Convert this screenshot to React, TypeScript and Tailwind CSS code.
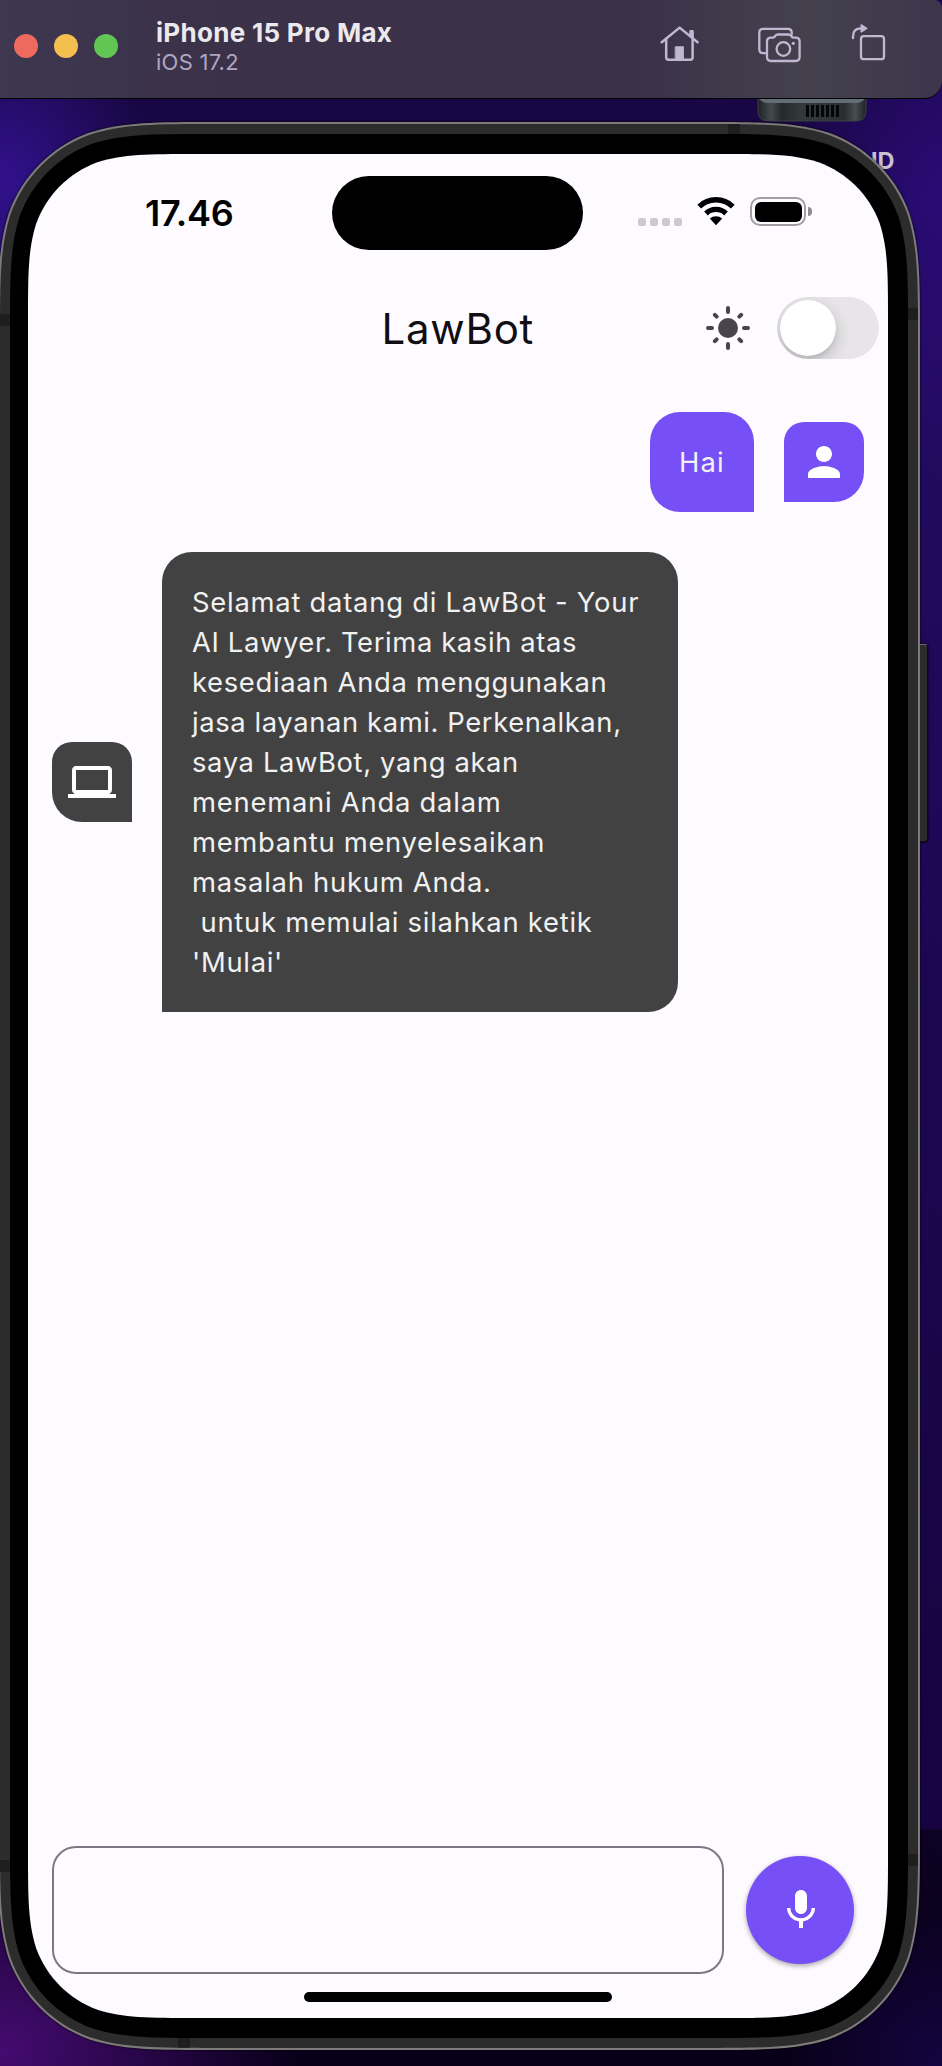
import type { ReactNode } from "react";

/** Rounded rectangle with continuous (squircle-like) corners, as a CSS path. */
function continuousRect(w: number, h: number, r: number): string {
  const corner = (px: (a: number, b: number) => string) =>
    `L${px(1.528665, 0)}` +
    `C${px(1.088493, 0)} ${px(0.868407, 0)} ${px(0.631494, 0.074911)}` +
    `C${px(0.372824, 0.169059)} ${px(0.16906, 0.372824)} ${px(0.074911, 0.631494)}` +
    `C${px(0, 0.868407)} ${px(0, 1.088493)} ${px(0, 1.528665)}`;
  const reversed = (px: (a: number, b: number) => string) => corner((a, b) => px(b, a));
  const f = (x: number, y: number) => `${x.toFixed(2)},${y.toFixed(2)} `;
  const tr = corner((a, b) => f(w - a * r, b * r));
  const br = reversed((a, b) => f(w - a * r, h - b * r));
  const bl = corner((a, b) => f(a * r, h - b * r));
  const tl = reversed((a, b) => f(a * r, b * r));
  return `path("M${f(1.528665 * r, 0)}${tr}${br}${bl}${tl}Z")`;
}

function Layer(props: { w: number; h: number; r: number; className: string; children?: ReactNode }) {
  return (
    <div className={props.className} style={{ width: props.w, height: props.h, clipPath: continuousRect(props.w, props.h, props.r) }}>
      {props.children}
    </div>
  );
}

function HomeIcon() {
  return (
    <svg width="40" height="44" viewBox="0 0 40 44" fill="none" stroke="#c0b8d0" strokeWidth="2.5" strokeLinecap="round" strokeLinejoin="round">
      <path d="M1.7 22.3 19.6 7.6 37.6 22.3" />
      <path d="M6.2 19.5V37.3q0 2.5 2.5 2.5H30.1q2.5 0 2.5-2.5V19.5" />
      <path d="M30.6 11.2h2v6.3l-2-1.6z" fill="#c0b8d0" />
      <path d="M15.6 26.8h7.8v13h-7.8z" fill="#c0b8d0" strokeWidth="1" />
    </svg>
  );
}

function CameraIcon() {
  return (
    <svg width="48" height="44" viewBox="0 0 48 44" fill="none" stroke="#c0b8d0" strokeWidth="2.3" strokeLinecap="round" strokeLinejoin="round">
      <path d="M35.7 14.6V12.6q0-3.8-3.8-3.8H7.1Q3.3 8.8 3.3 12.6V29.3Q3.3 33.1 7.1 33.1H9.8" />
      <path d="M11 21.6q0-3.9 3.9-3.9h1.9q1.1 0 1.8-.9l1-1.2q.9-1.1 2.2-1.1h10.8q1.3 0 2.2 1.1l1 1.2q.7.9 1.8.9h2.1q3.9 0 3.9 3.9V37.1q0 3.9-3.9 3.9H14.9q-3.9 0-3.9-3.9z" />
      <circle cx="27.4" cy="29" r="6.8" />
      <circle cx="37.3" cy="23.3" r="1.6" fill="#c0b8d0" stroke="none" />
    </svg>
  );
}

function RotateIcon() {
  return (
    <svg width="40" height="44" viewBox="0 0 40 44" fill="none" stroke="#c0b8d0" strokeWidth="2.3" strokeLinecap="round" strokeLinejoin="round">
      <rect x="13" y="16.2" width="23" height="23" rx="2.8" />
      <path d="M5 18.2V16.4Q5 8.4 13 8.4" />
      <path d="M13.2 4.9V11.9L18.8 8.4z" fill="#c0b8d0" strokeWidth="1.4" />
    </svg>
  );
}

function TitleBar() {
  return (
    <header className="relative flex h-[99px] w-[942px] shrink-0 items-start rounded-br-[18px] rounded-tr-[8px] border-b border-black bg-[linear-gradient(90deg,#3d374f_0%,#3b3149_25%,#3b3149_68%,#403b4b_78%,#44414d_86%,#3c364c_100%)]">
      <div className="ml-[14px] mt-[34px] flex gap-4">
        <span className="size-6 rounded-full bg-[#ee6a5f]" />
        <span className="size-6 rounded-full bg-[#f5bf4f]" />
        <span className="size-6 rounded-full bg-[#62c655]" />
      </div>
      <div className="ml-[38px] mt-[17px] w-[300px]">
        <h1 className="text-[26px] leading-[32px] font-bold tracking-[0.3px] text-[#ebe9ee]">iPhone 15 Pro Max</h1>
        <p className="text-[22px] leading-[26px] tracking-[0.25px] text-[#afa6c2]">iOS 17.2</p>
      </div>
      <div className="mt-5 ml-auto mr-[54px] flex">
        <HomeIcon />
        <span className="w-14" />
        <CameraIcon />
        <span className="w-11" />
        <RotateIcon />
      </div>
    </header>
  );
}

function DriveIcon() {
  return (
    <svg className="absolute left-[756px] top-[88px]" width="112" height="36" viewBox="0 0 112 36">
      <defs>
        <linearGradient id="drive" x1="0" x2="1" y1="0" y2="0">
          <stop offset="0" stopColor="#1d2224" />
          <stop offset="0.12" stopColor="#454a4c" />
          <stop offset="0.22" stopColor="#25292b" />
          <stop offset="0.4" stopColor="#34393b" />
          <stop offset="0.8" stopColor="#2a2e30" />
          <stop offset="0.9" stopColor="#484d4f" />
          <stop offset="1" stopColor="#1d2224" />
        </linearGradient>
      </defs>
      <path d="M2 8H110V22Q110 33 100 33H12Q2 33 2 22Z" fill="url(#drive)" stroke="#3d4244" strokeWidth="1" />
      <path d="M1 4H111Q110 14 101 15H11Q2 14 1 4Z" fill="#646d74" />
      {[50, 55, 60, 65, 70, 75, 80].map((x) => (
        <rect key={x} x={x} y="17" width="3" height="12" fill="#050607" />
      ))}
    </svg>
  );
}

function StatusBar() {
  return (
    <div className="flex h-[120px] items-start">
      <div className="ml-[117px] mt-[37px] w-[110px] text-[36px] leading-[44px] font-semibold tracking-[-0.3px] text-black">17.46</div>
      <div className="ml-[77px] mt-[22px] h-[74px] w-[251px] rounded-[37px] bg-black" />
      <div className="ml-[55px] mt-[64px] flex gap-1">
        {[0, 1, 2, 3].map((n) => (
          <span key={n} className="size-2 rounded-[2.5px] bg-[#cbc9cd]" />
        ))}
      </div>
      <svg className="ml-[14.5px] mt-[43px]" width="38" height="29" viewBox="0 0 38 29" fill="none" stroke="#000" strokeWidth="5.3">
        <path d="M2.2 9.6A24 24 0 0 1 35.8 9.6" />
        <path d="M9 16.5A14.3 14.3 0 0 1 29 16.5" />
        <path d="M19 28.2 12.8 21.6A9.2 9.2 0 0 1 25.2 21.6Z" fill="#000" stroke="none" />
      </svg>
      <div className="ml-[15.5px] mt-[43px] h-[29px] w-14 rounded-[10px] border-2 border-[#a09ea1] p-[2.5px]">
        <div className="h-full rounded-[6px] bg-black" />
      </div>
      <div className="ml-[2px] mt-[53px] h-[9px] w-1 rounded-r-full bg-[#8d8b8e]" />
    </div>
  );
}

function SunIcon() {
  return (
    <svg width="48" height="48" viewBox="-24 -24 48 48" stroke="#49454f" strokeWidth="4" strokeLinecap="round">
      <circle r="10" fill="#49454f" stroke="none" />
      <path d="M0-20v4M0 20v-4M-20 0h4M20 0h-4M-13.2-13.2l1.9 1.9M13.2-13.2l-1.9 1.9M-13.2 13.2l1.9-1.9M13.2 13.2l-1.9-1.9" />
    </svg>
  );
}

function AppBar() {
  return (
    <div className="flex h-[108px] items-center">
      <h2 className="ml-[353.5px] w-[322.5px] pt-px text-[42px] leading-[52px] tracking-[0.75px] text-[#100e12]">LawBot</h2>
      <SunIcon />
      <div className="ml-[25px] flex h-[62px] w-[102px] items-center overflow-hidden rounded-full bg-[#e7e5e8] pl-[3px]">
        <div className="size-14 rounded-full bg-white shadow-[0_6px_16px_rgba(0,0,0,0.2),0_3px_3px_rgba(0,0,0,0.06)]" />
      </div>
    </div>
  );
}

const lines: { text: string; className: string }[] = [
  { text: "Selamat datang di LawBot - Your", className: "tracking-[0.75px]" },
  { text: "AI Lawyer. Terima kasih atas", className: "tracking-[0.61px]" },
  { text: "kesediaan Anda menggunakan", className: "tracking-[0.67px]" },
  { text: "jasa layanan kami. Perkenalkan,", className: "tracking-[0.6px]" },
  { text: "saya LawBot, yang akan", className: "tracking-[0.62px]" },
  { text: "menemani Anda dalam", className: "tracking-[0.76px]" },
  { text: "membantu menyelesaikan", className: "tracking-[0.7px]" },
  { text: "masalah hukum Anda.", className: "tracking-[0.74px]" },
  { text: " untuk memulai silahkan ketik", className: "tracking-[0.74px]" },
  { text: "'Mulai'", className: "tracking-[0.72px]" },
];

function Chat() {
  return (
    <main className="flex-1 text-[27.4px] leading-[40px] text-[#f1f1f1]">
      <div className="flex items-center justify-end pr-[24px] pt-[30px]">
        <div className="flex h-[100px] w-[104.5px] items-center rounded-[30px] rounded-br-none bg-[#7650f6] pl-[29.5px] tracking-[1.1px]">Hai</div>
        <div className="ml-[30px] flex size-20 items-center justify-center rounded-[20px] rounded-br-[30px] rounded-bl-none bg-[#7650f6]">
          <svg width="48" height="48" viewBox="0 0 24 24" fill="#fff">
            <path d="M12 12c2.21 0 4-1.79 4-4s-1.79-4-4-4-4 1.79-4 4 1.79 4 4 4zm0 2c-2.67 0-8 1.34-8 4v2h16v-2c0-2.66-5.33-4-8-4z" />
          </svg>
        </div>
      </div>
      <div className="mt-10 flex items-center pl-6">
        <div className="flex size-20 items-center justify-center rounded-[20px] rounded-br-none rounded-bl-[30px] bg-[#424242]">
          <svg width="48" height="48" viewBox="0 0 24 24" fill="#fff">
            <path d="M20 18c1.1 0 1.99-.9 1.99-2L22 6c0-1.1-.9-2-2-2H4c-1.1 0-2 .9-2 2v10c0 1.1.9 2 2 2H0v2h24v-2h-4zM4 6h16v10H4V6z" />
          </svg>
        </div>
        <div className="ml-[30px] w-[516px] rounded-[30px] rounded-bl-none bg-[#424242] p-[30px]">
          {lines.map((line) => (
            <p key={line.text} className={`whitespace-pre ${line.className}`}>
              {line.text}
            </p>
          ))}
        </div>
      </div>
    </main>
  );
}

function Composer() {
  return (
    <footer className="flex h-[172px] flex-col">
      <div className="flex items-center pl-6">
        <input aria-label="Pesan" className="h-32 w-[672px] rounded-[24px] border-2 border-[#7d7785] bg-transparent px-6 text-[28px] outline-none" />
        <button type="button" aria-label="Rekam suara" className="ml-[22px] flex size-[108px] items-center justify-center rounded-full bg-[#7650f6] pl-[1px] shadow-[0_2px_5px_rgba(0,0,0,0.35)]">
          <svg width="48" height="48" viewBox="0 0 24 24" fill="#fff">
            <path d="M12 14c1.66 0 2.99-1.34 2.99-3L15 5c0-1.66-1.34-3-3-3S9 3.34 9 5v6c0 1.66 1.34 3 3 3zm5.3-3c0 3-2.54 5.1-5.3 5.1S6.7 14 6.7 11H5c0 3.41 2.72 6.23 6 6.72V21h2v-3.28c3.28-.48 6-3.3 6-6.72h-1.7z" />
          </svg>
        </button>
      </div>
      <div className="mt-[18px] ml-[276px] h-[10px] w-[308px] rounded-full bg-black" />
    </footer>
  );
}

function Phone() {
  return (
    <div className="relative mt-[23px] -ml-[2px] w-[922px] shrink-0 drop-shadow-[0_0_1px_#000]">
      <div className="absolute top-[522px] left-[921px] h-[198px] w-[9px] rounded-r-[3px] border border-l-0 border-[#0d0d0f] border-t-[#6a6a6c] bg-[#2c2c2c]" />
      <Layer w={922} h={1928} r={144} className="bg-[#7d7c7b] p-[2px]">
        <Layer w={918} h={1924} r={142} className="relative bg-[#2c2c2c] p-[10px]">
          <span className="absolute top-0 left-[728px] h-[10px] w-3 bg-[#1e1e1e]" />
          <span className="absolute bottom-0 left-[178px] h-[10px] w-3 bg-[#1e1e1e]" />
          <span className="absolute top-[190px] left-0 h-3 w-[10px] bg-[#1e1e1e]" />
          <span className="absolute top-[184px] right-0 h-3 w-[10px] bg-[#1e1e1e]" />
          <span className="absolute top-[1736px] left-0 h-3 w-[10px] bg-[#1e1e1e]" />
          <span className="absolute top-[1730px] right-0 h-3 w-[10px] bg-[#1e1e1e]" />
          <Layer w={898} h={1904} r={130} className="relative bg-black pt-[20px] pl-[18px]">
            <Layer w={860} h={1864} r={110} className="flex flex-col bg-[#fdfbff]">
              <StatusBar />
              <AppBar />
              <Chat />
              <Composer />
            </Layer>
          </Layer>
        </Layer>
      </Layer>
    </div>
  );
}

export default function App() {
  return (
    <div className="relative flex h-[2066px] w-[942px] flex-col overflow-hidden bg-[radial-gradient(ellipse_150px_170px_at_0px_180px,#31118c_0%,transparent_100%),radial-gradient(ellipse_150px_260px_at_942px_200px,#2a0b75_0%,transparent_100%),radial-gradient(ellipse_300px_240px_at_0px_2050px,#440b70_0%,transparent_100%),radial-gradient(ellipse_160px_160px_at_942px_2066px,#150441_0%,transparent_100%),linear-gradient(180deg,#190745_0px,#190745_122px,#230b62_320px,#1e0753_900px,#17033f_1829px,#0c0222_1830px,#080018_2066px)] font-['Inter',sans-serif]">
      <DriveIcon />
      <span className="absolute top-[147px] left-[860px] text-[23.5px] leading-[28px] font-bold text-[#c6c3cf]">HD</span>
      <TitleBar />
      <Phone />
    </div>
  );
}
